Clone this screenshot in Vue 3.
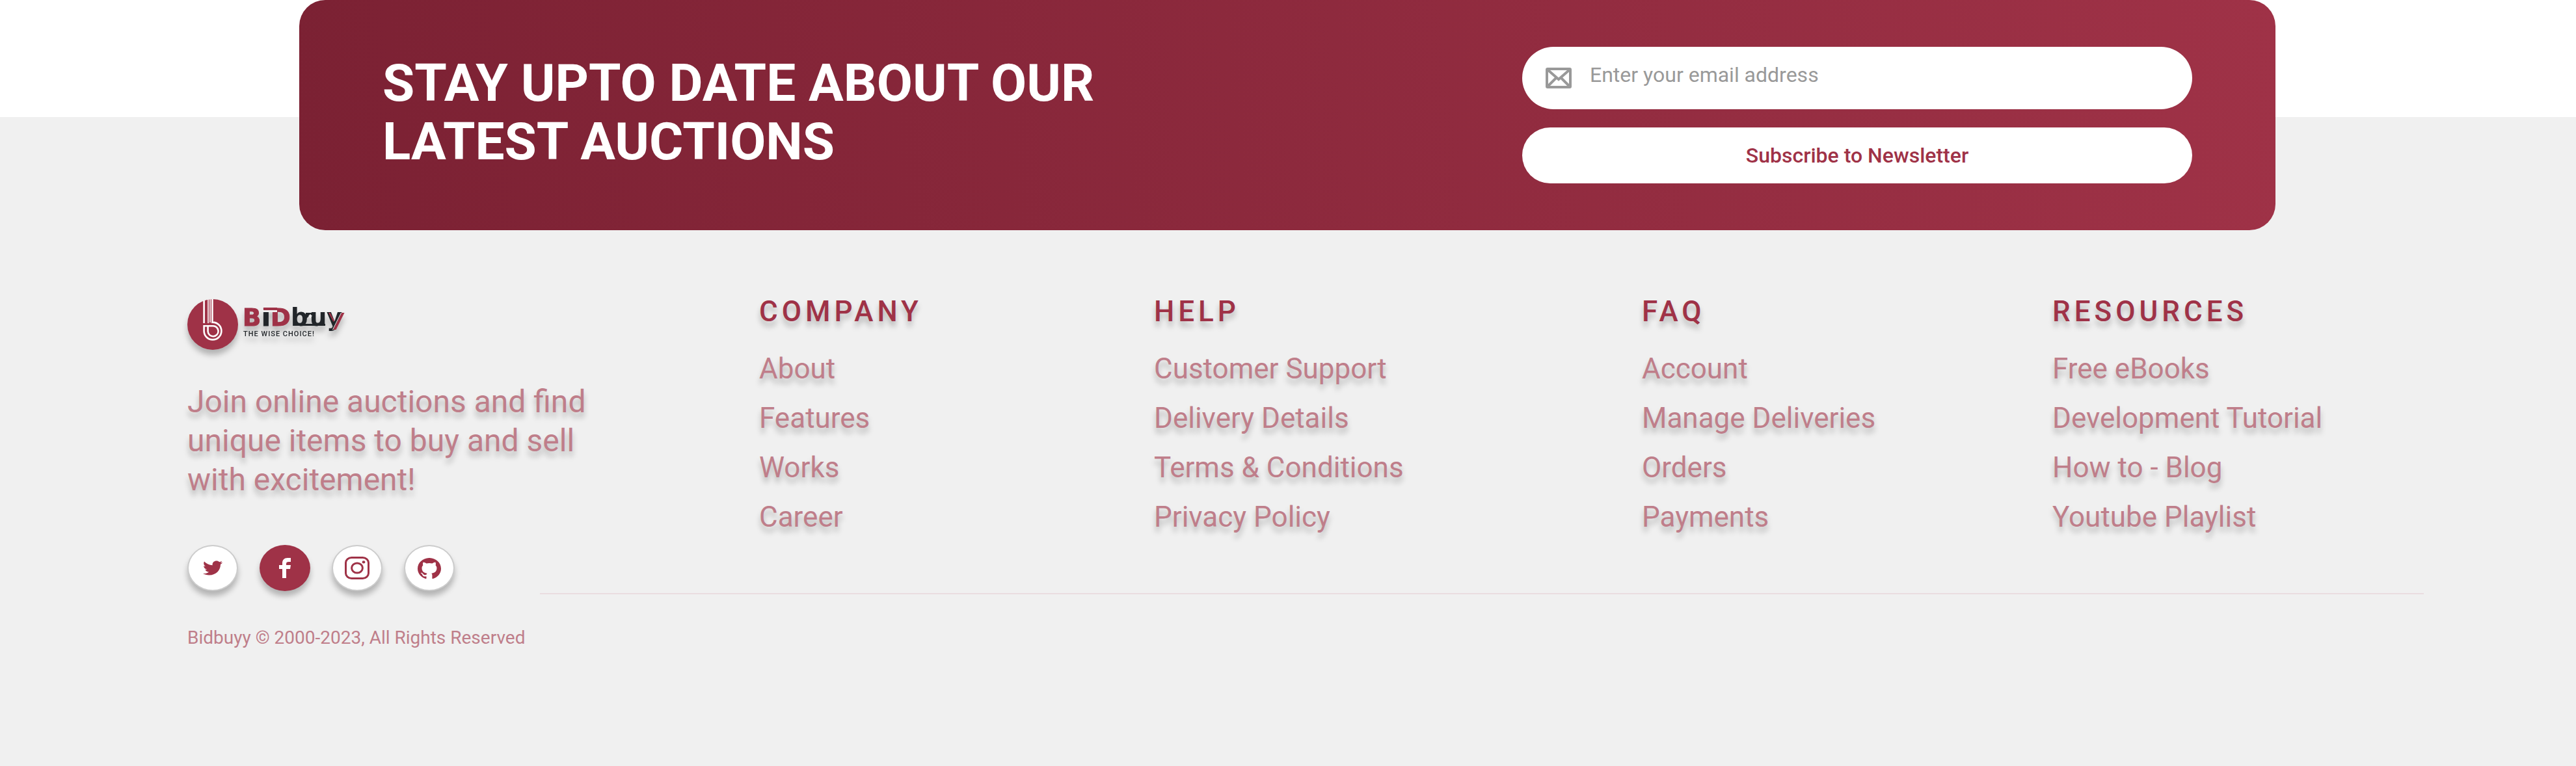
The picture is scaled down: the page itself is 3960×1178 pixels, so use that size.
<script setup>
import { ref } from 'vue'

const email = ref('')

const columns = [
  { title: 'COMPANY', links: ['About', 'Features', 'Works', 'Career'] },
  { title: 'HELP', links: ['Customer Support', 'Delivery Details', 'Terms & Conditions', 'Privacy Policy'] },
  { title: 'FAQ', links: ['Account', 'Manage Deliveries', 'Orders', 'Payments'] },
  { title: 'RESOURCES', links: ['Free eBooks', 'Development Tutorial', 'How to - Blog', 'Youtube Playlist'] },
]
</script>

<template>
  <div class="page">
    <section class="newsletter">
      <div class="banner">
        <h2 class="banner-title">STAY UPTO DATE ABOUT OUR LATEST AUCTIONS</h2>
        <form class="form" @submit.prevent>
          <label class="field">
            <svg class="mail" viewBox="0 0 40 32" aria-hidden="true">
              <rect x="2" y="2" width="36" height="28" rx="1" />
              <path d="M4 4 L20 18 L36 4" />
              <path d="M4 28 L16 16 M36 28 L24 16" />
            </svg>
            <input v-model="email" class="input" type="email" placeholder="Enter your email address" aria-label="Email address" />
          </label>
          <button class="subscribe" type="submit">Subscribe to Newsletter</button>
        </form>
      </div>
    </section>

    <footer class="footer">
      <div class="grid">
        <div class="brand">
          <a class="logo" href="#" aria-label="BIDbuy, the wise choice">
            <svg viewBox="0 0 248 80" aria-hidden="true">
              <circle cx="39" cy="39" r="39" fill="#9f3247" />
              <g fill="none" stroke="#fff">
                <path stroke-width="2.6" d="M25.6 2 V37" />
                <path stroke-width="1.6" d="M32 0 V37 M35 0 V36" />
                <path stroke-width="2.6" d="M25.6 41.3 H39 A8 8 0 1 1 31.6 49.5 V41.3" />
                <path stroke-width="2.6" d="M25.6 40 V49 A13.4 13.4 0 1 0 39 35.6 H38.4 V0" />
              </g>
              <text class="word" x="85" y="41" fill="#9f3247" stroke="#9f3247">B</text>
              <text class="word" x="114" y="41" fill="#212529" stroke="#212529">I</text>
              <text class="word" x="128" y="41" fill="#9f3247" stroke="#9f3247">D</text>
              <rect x="116" y="16" width="22" height="4" fill="#f0f0f0" />
              <rect x="117" y="13" width="21" height="4" fill="#9f3247" />
              <text class="word" x="159" y="41" fill="#212529">b</text>
              <text class="word" x="188" y="41" fill="#212529">u</text>
              <path d="M167 38 H212 V41 H167 Z M182 21 H196 V31 L189 24 L182 31 Z" fill="#212529" />
              <path d="M186 26 L189 23 L192 26 L190 27 V29 H188 V27 Z" fill="#f0f0f0" />
              <text class="word" x="214" y="41" fill="#212529">y</text>
              <path d="M237 21 H241.5 L228.5 47 H224 Z M217 21 H219.5 L226 33 L224.5 35 Z" fill="#9f3247" />
              <path d="M236 21 H237 L224 47 H223 Z" fill="#f0f0f0" />
              <text class="tagline" x="86" y="57" fill="#212529">THE WISE CHOICE!</text>
            </svg>
          </a>
          <p class="about">Join online auctions and find unique items to buy and sell with excitement!</p>
          <div class="socials">
            <a class="social" href="#" aria-label="Twitter">
              <svg class="twitter" viewBox="0 1.8 24 20.4" preserveAspectRatio="none">
                <path d="M23.954 4.569c-.885.389-1.83.654-2.825.775 1.014-.611 1.794-1.574 2.163-2.723-.951.555-2.005.959-3.127 1.184-.896-.959-2.173-1.559-3.591-1.559-2.717 0-4.92 2.203-4.92 4.917 0 .39.045.765.127 1.124C7.691 8.094 4.066 6.13 1.64 3.161c-.427.722-.666 1.561-.666 2.475 0 1.71.87 3.213 2.188 4.096-.807-.026-1.566-.248-2.228-.616v.061c0 2.385 1.693 4.374 3.946 4.827-.413.111-.849.171-1.296.171-.314 0-.615-.03-.916-.086.631 1.953 2.445 3.377 4.604 3.417-1.68 1.319-3.809 2.105-6.102 2.105-.39 0-.779-.023-1.17-.067 2.189 1.394 4.768 2.209 7.557 2.209 9.054 0 13.999-7.496 13.999-13.986 0-.209 0-.42-.015-.63.961-.689 1.8-1.56 2.46-2.548z" />
              </svg>
            </a>
            <a class="social active" href="#" aria-label="Facebook">
              <svg class="facebook" viewBox="0 0 18 31">
                <path d="M5 31 V17 H0 V11 H5 V8 C5 3 8 0 13 0 H18 V6 H15 C12 6 11 7 11 9 V11 H18 L17 17 H11 V31 Z" />
              </svg>
            </a>
            <a class="social" href="#" aria-label="Instagram">
              <svg class="instagram" viewBox="0 0 38 35">
                <rect x="1.5" y="1.5" width="35" height="32" rx="9" ry="8" fill="none" stroke="#9f3247" stroke-width="3" />
                <ellipse cx="19" cy="17.5" rx="8.4" ry="7.6" fill="none" stroke="#9f3247" stroke-width="3" />
                <ellipse cx="29" cy="8.4" rx="2.4" ry="2.1" />
              </svg>
            </a>
            <a class="social" href="#" aria-label="GitHub">
              <svg class="github" viewBox="0 0.3 24 23.4" preserveAspectRatio="none">
                <path d="M12 .297c-6.63 0-12 5.373-12 12 0 5.303 3.438 9.8 8.205 11.385.6.113.82-.258.82-.577 0-.285-.01-1.04-.015-2.04-3.338.724-4.042-1.61-4.042-1.61C4.422 18.07 3.633 17.7 3.633 17.7c-1.087-.744.084-.729.084-.729 1.205.084 1.838 1.236 1.838 1.236 1.07 1.835 2.809 1.305 3.495.998.108-.776.417-1.305.76-1.605-2.665-.3-5.466-1.332-5.466-5.93 0-1.31.465-2.38 1.235-3.22-.135-.303-.54-1.523.105-3.176 0 0 1.005-.322 3.3 1.23.96-.267 1.98-.399 3-.405 1.02.006 2.04.138 3 .405 2.28-1.552 3.285-1.23 3.285-1.23.645 1.653.24 2.873.12 3.176.765.84 1.23 1.91 1.23 3.22 0 4.61-2.805 5.625-5.475 5.92.42.36.81 1.096.81 2.22 0 1.606-.015 2.896-.015 3.286 0 .315.21.69.825.57C20.565 22.092 24 17.592 24 12.297c0-6.627-5.373-12-12-12" />
              </svg>
            </a>
          </div>
        </div>

        <nav v-for="col in columns" :key="col.title" class="column" :aria-label="col.title">
          <h3 class="column-title">{{ col.title }}</h3>
          <ul class="links">
            <li v-for="link in col.links" :key="link"><a href="#">{{ link }}</a></li>
          </ul>
        </nav>
      </div>
      <hr class="divider" />
      <p class="copyright">Bidbuyy © 2000-2023, All Rights Reserved</p>
    </footer>
  </div>
</template>

<style>
html {
  background: #f0f0f0;
}

body {
  margin: 0;
}
</style>

<style scoped>
.page {
  font-family: Roboto, "Liberation Sans", sans-serif;
  background: #f0f0f0;
  color: #9f3247;
}

.newsletter {
  padding: 0 462px 0 460px;
  background: linear-gradient(#fff 180px, #f0f0f0 180px);
}

.banner {
  display: flex;
  justify-content: space-between;
  gap: 80px;
  padding: 72px 128px;
  border-radius: 40px;
  background: linear-gradient(83deg, #7b2133, #9f3247);
}

.banner-title {
  flex: 0 1 1160px;
  margin: 11px 0 0;
  font-size: 80px;
  font-weight: 700;
  line-height: 90px;
  color: #fff;
}

.form {
  display: flex;
  flex: 0 1 1030px;
  flex-direction: column;
  gap: 28px;
}

.field {
  display: flex;
  align-items: center;
  gap: 28px;
  height: 96px;
  padding: 0 36px;
  box-sizing: border-box;
  border-radius: 48px;
  background: #fff;
}

.mail {
  flex: none;
  width: 40px;
  height: 32px;
  fill: none;
  stroke: #999;
  stroke-width: 4;
}

.input {
  flex: 1;
  min-width: 0;
  padding: 0 0 10px;
  border: 0;
  outline: 0;
  background: transparent;
  font: 400 32px/38px Roboto, "Liberation Sans", sans-serif;
  color: #333;
}

.input::placeholder {
  color: #999;
  opacity: 1;
}

.subscribe {
  height: 86px;
  border: 0;
  border-radius: 43px;
  background: #fff;
  font: 500 32px/38px Roboto, "Liberation Sans", sans-serif;
  color: #9f3247;
}

.footer {
  padding: 99px 234px 180px 288px;
}

.grid {
  display: grid;
  grid-template-columns: 879fr 607fr 750fr 631fr 571fr;
}

.brand {
  display: flex;
  flex-direction: column;
  align-items: flex-start;
}

.logo {
  margin-top: 7px;
}

.logo svg {
  display: block;
  width: 248px;
  height: 80px;
  overflow: visible;
  filter: drop-shadow(0 8px 4px rgba(0, 0, 0, 0.25));
}

.word {
  font: 700 37px "DejaVu Sans", sans-serif;
}

.tagline {
  font: 500 11px Roboto, sans-serif;
  letter-spacing: 1px;
}

.about {
  max-width: 640px;
  margin: 48px 0 70px;
  font-size: 48px;
  line-height: 60px;
  color: #bf7e8a;
  text-shadow: 0 8px 8px rgba(0, 0, 0, 0.25);
}

.socials {
  display: flex;
  gap: 33px;
}

.social {
  display: flex;
  align-items: center;
  justify-content: center;
  width: 78px;
  height: 71px;
  box-sizing: border-box;
  border: 2px solid #ccc;
  border-radius: 50%;
  background: #fff;
  box-shadow: 0 8px 8px rgba(0, 0, 0, 0.25);
}

.social svg {
  fill: #9f3247;
}

.social.active {
  border-color: #9f3247;
  background: #9f3247;
}

.social.active svg {
  fill: #fff;
}

.twitter {
  width: 30px;
  height: 23px;
}

.facebook {
  width: 18px;
  height: 31px;
}

.instagram {
  width: 38px;
  height: 35px;
}

.github {
  width: 36px;
  height: 32px;
}

.column-title {
  margin: 0 0 36px;
  font-size: 44px;
  font-weight: 500;
  line-height: 52px;
  letter-spacing: 6px;
  text-shadow: 0 8px 8px rgba(0, 0, 0, 0.25);
}

.links {
  display: flex;
  flex-direction: column;
  gap: 24px;
  margin: 0;
  padding: 0;
  list-style: none;
  font-size: 44px;
  line-height: 52px;
}

.links a {
  color: #bf7e8a;
  text-decoration: none;
  text-shadow: 0 8px 8px rgba(0, 0, 0, 0.25);
}

.divider {
  height: 2px;
  margin: 3px 0 50px 542px;
  border: 0;
  background: #eadde0;
}

.copyright {
  margin: 0;
  font-size: 28px;
  line-height: 34px;
  color: #bf7e8a;
}
</style>
